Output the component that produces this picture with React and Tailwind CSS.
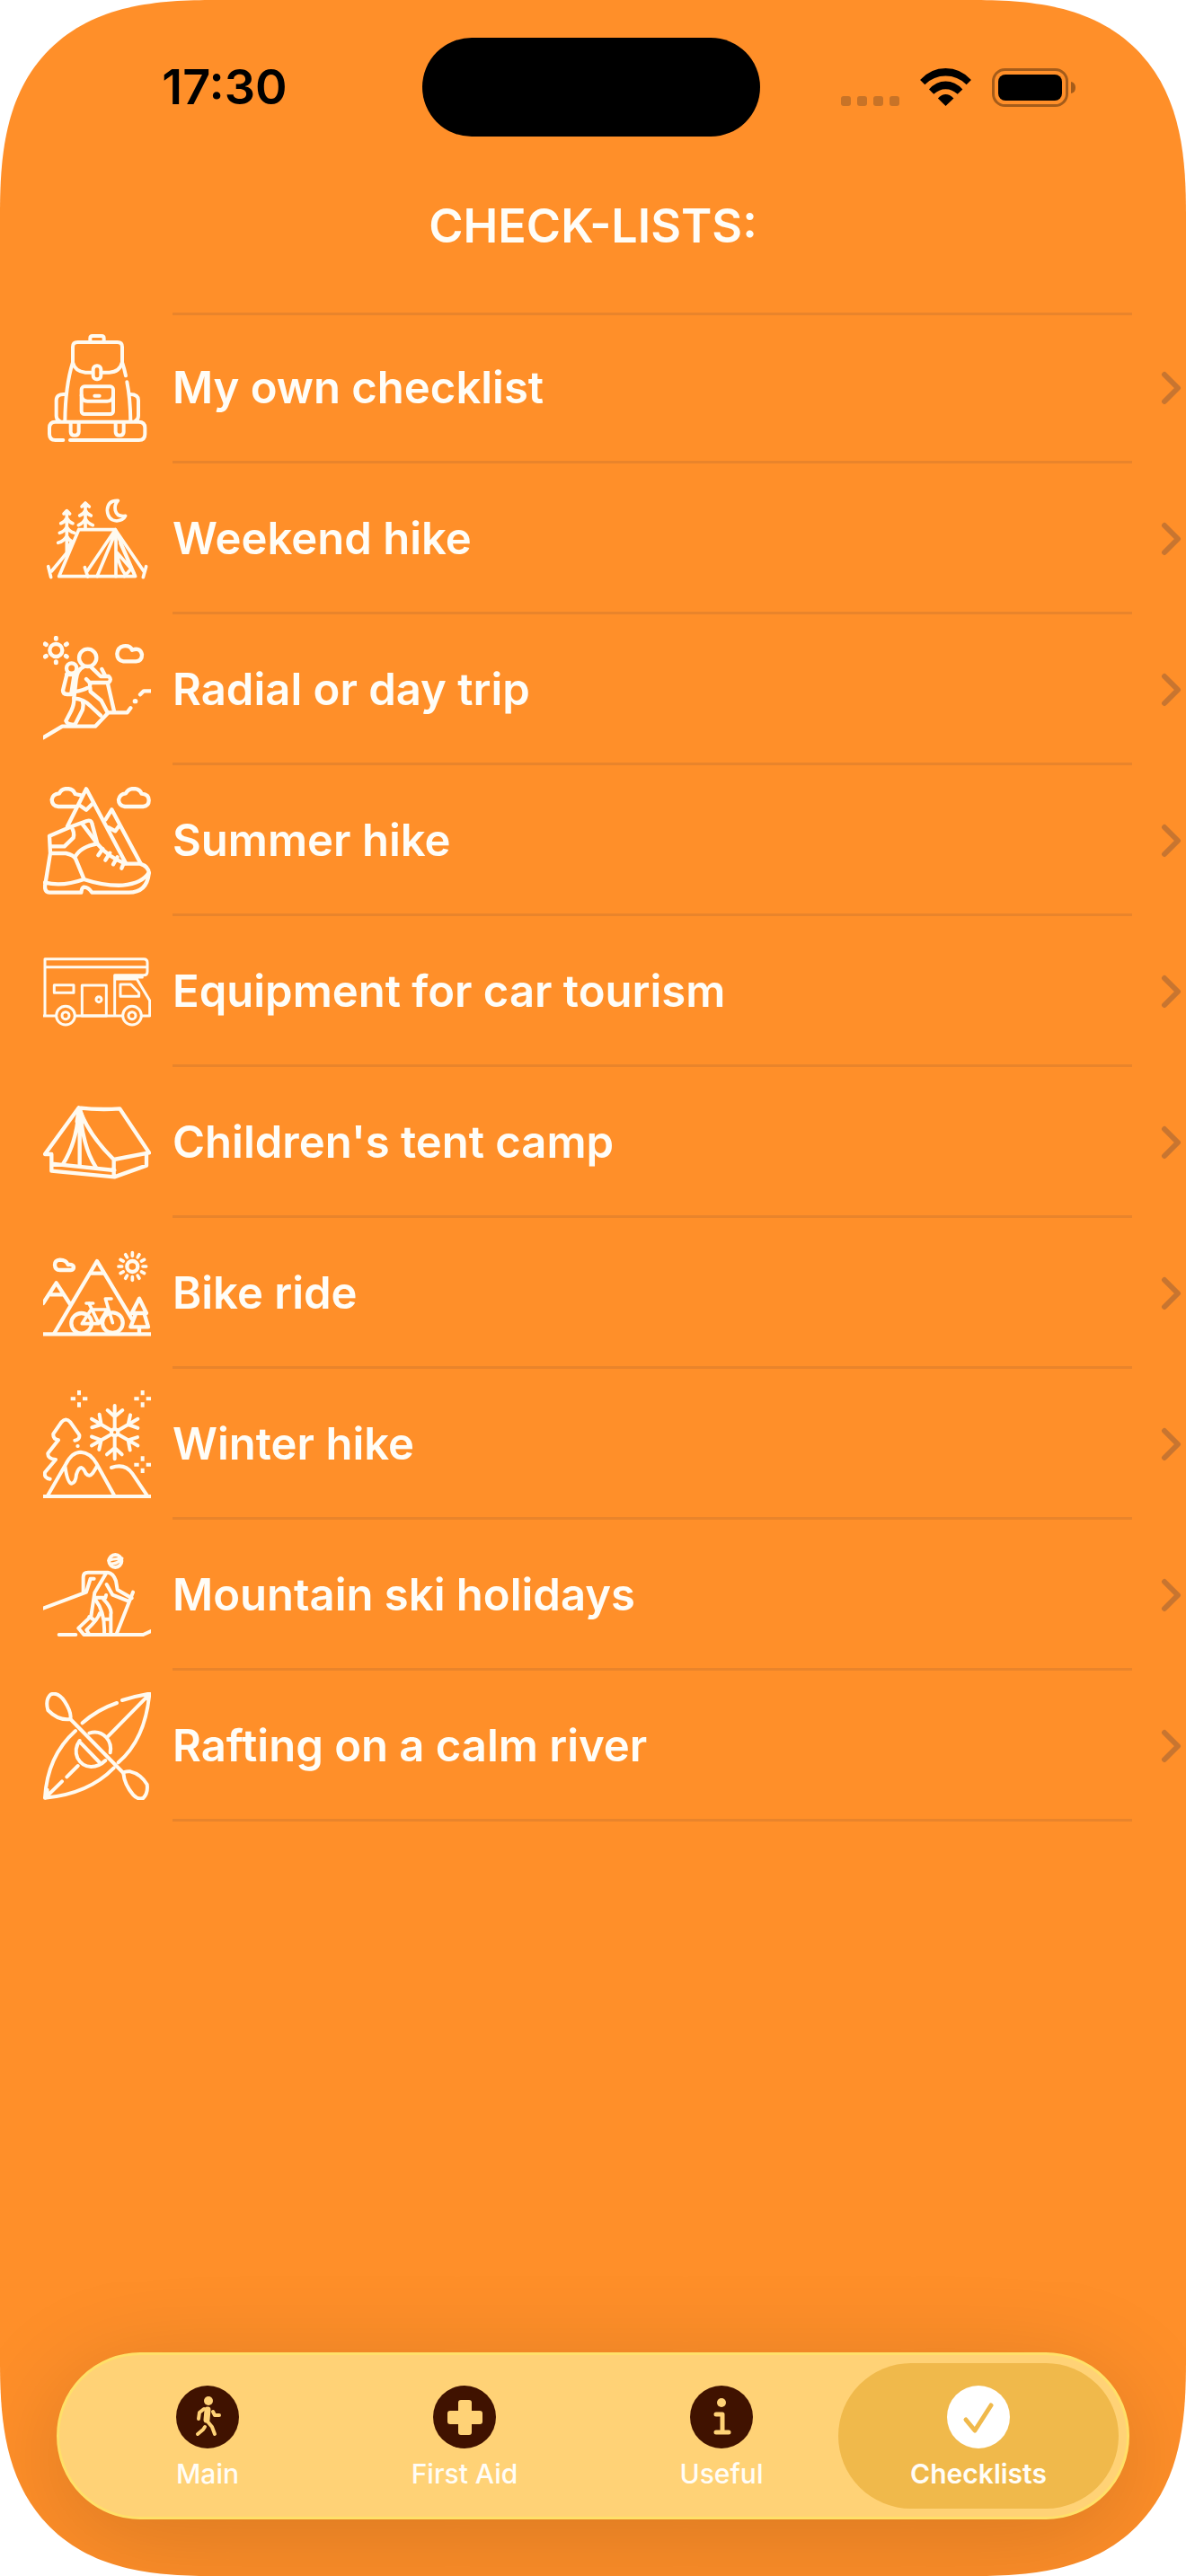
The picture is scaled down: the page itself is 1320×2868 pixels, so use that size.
import React from 'react';

function Drawing({ viewBox, width = 12, children }) {
  return (
    <svg
      viewBox={viewBox}
      className="size-[120px] shrink-0 text-[#fffaf0]"
      fill="none"
      stroke="currentColor"
      strokeWidth={width}
      strokeLinecap="round"
      strokeLinejoin="round"
      aria-hidden="true"
    >
      {children}
    </svg>
  );
}

function BackpackIcon() {
  return (
    <Drawing viewBox="54 36 360 360">
      <path d="M211 62V50Q211 42 219 42H249Q257 42 257 50V62" />
      <path d="M218 164H195Q160 160 153 130V79Q153 63 169 63H302Q318 63 318 79V130Q310 163 275 164H248" />
      <rect x="221" y="142" width="26" height="45" rx="12" />
      <path d="M153 130Q128 210 127 326M318 130Q326 155 330 175M334 196Q345 250 346 326" />
      <rect x="182" y="211" width="106" height="92" rx="10" />
      <path d="M182 240Q184 260 202 260H268Q287 260 288 240M226 242H242" />
      <path d="M127 237Q98 235 98 257V308Q98 322 108 326M344 237Q372 237 372 257V308Q372 322 362 326" />
      <path d="M121 390H95Q75 390 75 370V349Q75 329 95 329H373Q394 329 394 349V370Q394 390 374 390H144" />
      <path d="M146 330V362Q146 374 159 374Q173 374 173 362V330M296 330V362Q296 374 309 374Q323 374 323 362V330" />
    </Drawing>
  );
}

function CampIcon() {
  return (
    <Drawing viewBox="54 540 360 360" width={11}>
      <path d="M173 689H295L362 845H107L173 689" />
      <path d="M295 689L390 828M295 689L201 828M297 695L234 845M297 695V845M300 765L348 820L325 845M300 768Q308 812 330 842M312 735L358 838" />
      <path d="M71 812L80 848M76 828H82L137 762M398 812L388 848M193 815L203 846" />
      <path d="M133 626V776M123 636L133 626L143 636M113 668Q126 664 133 650Q140 664 153 668M109 700Q125 696 133 680Q141 696 158 700M104 733Q124 728 133 710Q139 724 150 728M133 762L148 730" />
      <path d="M195 601V686M183 612L195 600L208 612M176 642Q189 638 195 624Q201 638 214 642M172 674Q188 668 195 652Q202 668 220 674" />
      <path d="M304 592Q270 590 268 624Q270 658 300 660Q322 658 329 643Q301 648 295 625Q291 605 304 592Z" />
    </Drawing>
  );
}

function HikerIcon() {
  return (
    <Drawing viewBox="54 54 360 360" width={13}>
      <circle cx="97" cy="102" r="21" />
      <path d="M97 61V64M97 140V143M61 81L64 83M130 83L133 81M61 123L64 121M130 121L133 123" strokeWidth="15" />
      <circle cx="203" cy="127" r="29" />
      <path d="M322 139Q301 136 301 114Q303 92 322 88Q345 85 351 101Q378 91 384 116Q384 137 364 139Z" />
      <circle cx="149" cy="162" r="17" />
      <path d="M134 180L120 236Q120 248 134 249H150M132 183H158L148 246" />
      <path d="M190 157Q168 166 164 200L157 262Q192 266 212 288L246 320" />
      <path d="M214 158L246 189H273Q284 200 273 210H208M198 198L212 212L209 224Q185 238 160 240M250 165L262 188M270 214L291 305" />
      <path d="M211 226L212 240L248 270L268 308M157 262Q158 282 148 304L130 338Q134 350 160 351L186 300Q190 285 186 273" />
      <path d="M54 394L118 356H228L272 310H335L346 295M378 250L390 238H414" />
      <path d="M361 272H362" strokeWidth="16" />
    </Drawing>
  );
}

function BootIcon() {
  return (
    <Drawing viewBox="54 558 360 360" width={13}>
      <path d="M163 624H105Q83 622 83 601Q86 581 108 580Q115 564 135 564Q155 565 161 582L180 586" />
      <path d="M327 624Q306 621 306 601Q310 581 330 580Q338 564 357 564Q377 565 383 581Q407 583 407 603Q407 622 388 624Z" />
      <path d="M135 690L198 565L330 813M172 617L198 635L222 611M262 668L283 634L379 813M273 694L295 706L308 688" />
      <path d="M75 722L150 690L200 672Q215 668 217 680L235 748Q270 792 330 815H378Q408 825 407 848Q400 910 340 911H217Q205 893 190 893Q183 895 181 911H75Q60 910 60 890L78 780Z" />
      <path d="M80 757H125L155 728Q160 710 148 692M80 780H130Q156 785 163 800L190 865M161 792Q178 758 235 748M185 682L235 748" />
      <path d="M60 878Q120 892 190 867Q260 890 320 887Q385 880 407 845" />
      <path d="M253 765L238 787M277 779L262 803M302 793L288 817M325 809L316 830" />
    </Drawing>
  );
}

function CamperIcon() {
  return (
    <Drawing viewBox="54 42 360 360" width={9}>
      <path d="M54 303H97M160 303H320M384 303H410V252L367 180H297M60 303V113H390Q402 113 402 125V155Q402 167 390 167H293V303M60 140H402M297 174H385" />
      <rect x="91" y="200" width="65" height="26" />
      <rect x="184" y="201" width="81" height="102" />
      <circle cx="240" cy="248" r="9" />
      <path d="M312 198H347L374 226V238H312Z" />
      <circle cx="129" cy="302" r="31" />
      <circle cx="129" cy="302" r="12" />
      <circle cx="351" cy="302" r="31" />
      <circle cx="351" cy="302" r="12" />
    </Drawing>
  );
}

function TentIcon() {
  return (
    <Drawing viewBox="54 546 360 360" width={13}>
      <path d="M173 610L60 765H82V821L292 841L399 803V766M173 610Q240 618 310 613L408 760L290 783Q205 700 173 610M290 783V841M82 797L292 819" />
      <path d="M173 620Q166 725 121 797M176 620V803M180 650Q192 750 230 808" />
      <path d="M168 655L175 615L190 655" strokeWidth="15" />
    </Drawing>
  );
}

function BikeIcon() {
  return (
    <Drawing viewBox="54 30 360 360" width={13}>
      <path d="M54 346H414" />
      <path d="M92 342L234 102L350 295M212 143H256M54 243L98 175L144 246M80 214H118" />
      <path d="M110 98Q93 99 93 115Q94 132 110 132H146Q156 131 156 122Q154 112 137 114Q131 98 110 98Z" />
      <circle cx="352" cy="120" r="18" />
      {[0, 30, 60, 90, 120, 150, 180, 210, 240, 270, 300, 330].map((angle) => (
        <path key={angle} d="M352 74V85" transform={`rotate(${angle} 352 120)`} strokeWidth="11" />
      ))}
      <path d="M375 227L350 276H399ZM362 282L346 322H405L393 282M375 325V345" />
      <circle cx="182" cy="310" r="34" />
      <circle cx="286" cy="308" r="34" />
      <path d="M184 311L214 264H268L240 311H184M207 243L240 311M198 243H221M286 308L262 228H282" strokeWidth="11" />
    </Drawing>
  );
}

function WinterIcon() {
  return (
    <Drawing viewBox="54 534 360 360" width={12}>
      <g strokeLinecap="butt">
        <path d="M174 534V550M174 574V590M146 562H162M186 562H202" />
        <path d="M386 534V550M386 574V590M358 562H374M398 562H414" />
        <path d="M386 754V770M386 794V810M358 782H374M398 782H414" />
      </g>
      <path d="M160 701Q177 699 175 683L145 640Q130 623 115 640L88 679Q86 697 105 700L70 744Q68 762 96 765L60 808Q56 826 77 830M169 720H170" />
      <path d="M54 888H412M69 886L130 780Q150 740 180 740Q212 742 232 778L292 886M127 785Q135 845 150 845Q163 842 165 815Q172 792 182 792Q190 795 197 812Q208 825 220 810Q230 795 235 785M282 792Q327 776 352 812L402 886" />
      <circle cx="293" cy="674" r="11" />
      {[0, 60, 120, 180, 240, 300].map((angle) => (
        <path key={angle} d="M293 662V585M269 600L293 622L319 600" transform={`rotate(${angle} 293 674)`} />
      ))}
    </Drawing>
  );
}

function SkierIcon() {
  return (
    <Drawing viewBox="54 18 360 360" width={12}>
      <circle cx="295" cy="84" r="21" />
      <path d="M272 82L288 78L318 75M284 92Q298 94 310 82" strokeWidth="9" />
      <path d="M54 242L198 188Q210 150 212 143H224M188 186V138Q188 122 204 122H270Q288 124 297 150L302 180L350 208M265 124L226 190L214 268L172 308L190 330H388L414 318" />
      <path d="M354 188L299 328M266 162L286 197L337 217M228 206H262L264 198M256 212Q285 242 280 262V328M228 212Q262 256 258 328M258 278H280M243 258Q238 278 199 314L207 328M208 270L226 282" />
      <path d="M107 330H163" />
    </Drawing>
  );
}

function KayakIcon() {
  return (
    <Drawing viewBox="54 522 360 360" width={12}>
      <path d="M60 875Q68 735 162 651M185 625Q235 580 300 558M318 549Q360 535 409 527Q395 680 305 757M290 775Q205 862 60 875" />
      <path d="M408 530L270 670M170 768L133 805M117 820L62 874M68 862V848M396 533L404 545" />
      <path d="M145 612L322 792M180 692L242 756" />
      <path d="M145 612Q105 618 70 582Q60 547 80 529Q105 521 126 553Q150 590 145 612ZM322 792Q325 830 355 865Q370 882 388 876Q405 860 401 830Q380 795 345 787Q325 786 322 792Z" />
      <path d="M208 659Q240 648 264 672Q284 694 278 724M176 684Q156 712 169 742Q184 770 214 771Q242 770 262 750" />
    </Drawing>
  );
}

const checklists = [
  { title: 'My own checklist', Icon: BackpackIcon },
  { title: 'Weekend hike', Icon: CampIcon },
  { title: 'Radial or day trip', Icon: HikerIcon },
  { title: 'Summer hike', Icon: BootIcon },
  { title: 'Equipment for car tourism', Icon: CamperIcon },
  { title: "Children's tent camp", Icon: TentIcon },
  { title: 'Bike ride', Icon: BikeIcon },
  { title: 'Winter hike', Icon: WinterIcon },
  { title: 'Mountain ski holidays', Icon: SkierIcon },
  { title: 'Rafting on a calm river', Icon: KayakIcon },
];

const tabs = [
  {
    label: 'Main',
    glyph: (
      <g stroke="#ffd276" fill="none" strokeWidth="3" strokeLinecap="round" strokeLinejoin="round">
        <circle cx="36" cy="17" r="5" fill="#ffd276" stroke="none" />
        <path d="M35 27L34 38" strokeWidth="7" />
        <path d="M31 26L26 30L25 37M41 29L43 33H48M35 40L40 46L43 54M32 46L30 49L24 54" strokeWidth="4" />
      </g>
    ),
  },
  {
    label: 'First Aid',
    glyph: (
      <g fill="#ffd276">
        <rect x="28" y="16" width="15" height="39" rx="3" />
        <rect x="16" y="28" width="39" height="15" rx="3" />
      </g>
    ),
  },
  {
    label: 'Useful',
    glyph: (
      <g stroke="#ffd276" fill="none" strokeWidth="5" strokeLinecap="round" strokeLinejoin="round">
        <circle cx="35" cy="19" r="5" fill="#ffd276" stroke="none" />
        <path d="M29 32H36V52M29 52H43" />
      </g>
    ),
  },
  {
    label: 'Checklists',
    active: true,
    glyph: (
      <path d="M21 38L31 50L49 22" stroke="#f0b94b" fill="none" strokeWidth="5" strokeLinecap="round" strokeLinejoin="round" />
    ),
  },
];

function StatusBar() {
  return (
    <div className="flex items-center pt-[42px]">
      <div className="flex-1 pl-[30px] text-center text-[54px] leading-[60px] font-semibold text-black">17:30</div>
      <div className="h-[110px] w-[376px] rounded-full bg-black" />
      <div className="flex flex-1 items-center justify-center gap-[23px] pr-[34px]">
        <div className="flex gap-[7px] pt-[30px]">
          <span className="size-[11px] rounded-[3px] bg-[#c87327]" />
          <span className="size-[11px] rounded-[3px] bg-[#c87327]" />
          <span className="size-[11px] rounded-[3px] bg-[#c87327]" />
          <span className="size-[11px] rounded-[3px] bg-[#c87327]" />
        </div>
        <svg viewBox="374 75 172 127" className="h-[42px] w-[57px]" aria-label="Wi-Fi">
          <path d="M374 114Q410 75 460 75Q510 75 546 114L530 130Q500 101 460 101Q420 101 390 130Z" />
          <path d="M404 146Q428 119 460 119Q492 119 517 146L500 162Q482 145 460 145Q438 145 420 162Z" />
          <path d="M434 176Q460 149 487 176L460 202Z" />
        </svg>
        <svg viewBox="0 0 93 43" className="h-[43px] w-[93px]" aria-label="Battery">
          <rect x="1.5" y="1.5" width="82" height="40" rx="13" fill="none" stroke="#a55c1a" strokeWidth="3" />
          <rect x="7" y="7" width="71" height="29" rx="8" />
          <path d="M88 15Q93 16 93 21.5Q93 27 88 28Z" fill="#a55c1a" />
        </svg>
      </div>
    </div>
  );
}

export default function App() {
  return (
    <div className="bg-white font-['Inter',sans-serif]">
      <div className="flex min-h-screen flex-col overflow-hidden rounded-[240px] bg-[#ff8f29] [corner-shape:superellipse(1.41)]">
        <StatusBar />

        <h1 className="pt-[66px] pb-[62px] text-center text-[52px] leading-[68px] font-semibold text-[#fffdf7]">CHECK-LISTS:</h1>

        <ul>
          {checklists.map(({ title, Icon }, index) => (
            <li key={title}>
              <a href="#checklist" className="relative flex h-[168px] items-center gap-6 pr-1 pl-12">
                {index === 0 && <span className="absolute top-0 right-[60px] left-[192px] h-[3px] bg-[#e9842b]" />}
                <Icon />
                <span className="flex-1 text-[49px] leading-[60px] font-semibold text-[#fffdf7]">{title}</span>
                <svg viewBox="0 0 24 38" className="h-[38px] w-6" fill="none" stroke="#c87530" strokeWidth="6" strokeLinecap="round" strokeLinejoin="round" aria-hidden="true">
                  <path d="M4 4L19 19L4 34" />
                </svg>
                <span className="absolute right-[60px] bottom-0 left-[192px] h-[3px] bg-[#e9842b]" />
              </a>
            </li>
          ))}
        </ul>

        <nav className="mx-[63px] mt-auto mb-[63px] flex rounded-full border-[3px] border-[#ffe068] bg-[#ffd276] p-[9px] shadow-[0_24px_120px_rgba(0,0,0,0.16)]">
          {tabs.map(({ label, glyph, active }, index) => (
            <button
              key={label}
              type="button"
              className={`flex h-[162px] flex-1 flex-col items-center rounded-full pt-[25px] text-[30px] leading-9 text-[#fffdf7] ${
                index > 0 ? '-ml-[26px]' : ''
              } ${active ? 'bg-[#f0b94b] font-semibold' : 'font-medium'}`}
            >
              <svg viewBox="0 0 70 70" className="mb-[10px] size-[70px]" aria-hidden="true">
                <circle cx="35" cy="35" r="35" fill={active ? '#ffffff' : '#401200'} />
                {glyph}
              </svg>
              {label}
            </button>
          ))}
        </nav>
      </div>
    </div>
  );
}
